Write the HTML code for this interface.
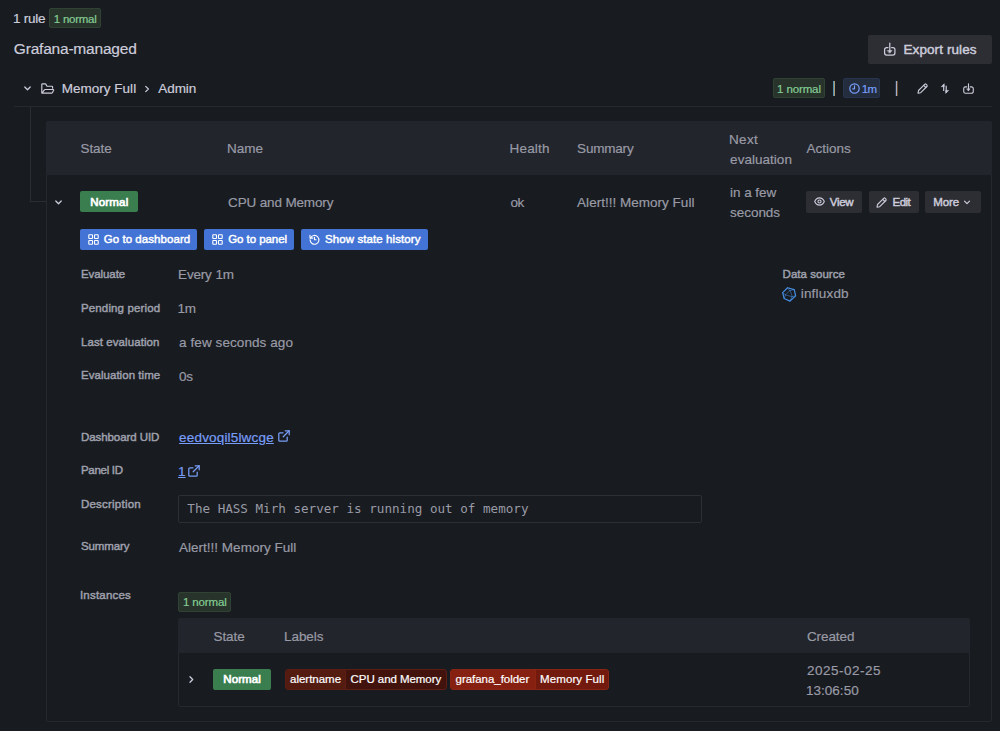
<!DOCTYPE html>
<html lang="en">
<head>
<meta charset="utf-8">
<title>Alert rules</title>
<style>
*{box-sizing:border-box;margin:0;padding:0}
html,body{width:1000px;height:731px;overflow:hidden;background:#181b1f;color:#ccccdc;font-family:"Liberation Sans", sans-serif;font-size:13px;line-height:20px}
.a,.t{position:absolute;white-space:nowrap}
.t{line-height:20px}
svg{position:absolute;overflow:visible}
</style>
</head>
<body>
<!-- summary badge -->
<div class="a" style="left:49px;top:8px;width:52px;height:20px;background:#28332b;border:1px solid #304234;border-radius:2px"></div>

<!-- export button -->
<div class="a" style="left:868px;top:35px;width:124px;height:29px;background:#2d2e33;border-radius:2px"></div>
<svg style="left:884px;top:42px" width="12" height="14" viewBox="0 0 12 14" fill="none" stroke="#ccccdc" stroke-width="1.250" stroke-linecap="round" stroke-linejoin="round"><path d="M4 5.600H2.600a2 2 0 0 0-2 2v3.400a2 2 0 0 0 2 2h6.300a2 2 0 0 0 2-2V7.600a2 2 0 0 0-2-2H7.600"/><path d="M5.800 1v8.500"/><path fill="#ccccdc" stroke-width=".6" d="M3.600 8.600h4.400L5.800 11z"/></svg>

<!-- folder row -->
<svg style="left:23px;top:85px" width="9" height="7" viewBox="0 0 9 7" fill="none" stroke="#ccccdc" stroke-width="1.3" stroke-linecap="round" stroke-linejoin="round"><path d="M1.800 2l2.700 2.700L7.200 2"/></svg>
<svg style="left:41px;top:83px" width="14" height="11" viewBox="0 0 14 11" fill="none" stroke="#ccccdc" stroke-width="1.150" stroke-linecap="round" stroke-linejoin="round"><path d="M.8 9.600V1.500a.7.7 0 0 1 .7-.7h2.700a.7.7 0 0 1 .6.350l1.200 2.050h4.900a.7.7 0 0 1 .7.7v1.300"/><path d="M.9 10.100l2.500-3.200a1 1 0 0 1 .8-.4h8a.5.5 0 0 1 .45.720l-1.300 2.450a.8.8 0 0 1-.7.430z"/></svg>
<svg style="left:144px;top:85px" width="6" height="8" viewBox="0 0 6 8" fill="none" stroke="#ccccdc" stroke-width="1.200" stroke-linecap="round" stroke-linejoin="round"><path d="M1.700 1.300L4.400 4 1.700 6.700"/></svg>

<!-- folder row right -->
<div class="a" style="left:773px;top:78px;width:52px;height:20px;background:#28332b;border:1px solid #304234;border-radius:2px"></div>
<div class="a" style="left:833px;top:81px;width:1px;height:15px;background:#4f8fb6"></div><div class="a" style="left:834px;top:81px;width:1px;height:15px;background:#b09c6e"></div>
<div class="a" style="left:843px;top:78px;width:37px;height:20px;background:#232d3e;border:1px solid #26344e;border-radius:2px"></div>
<svg style="left:848.500px;top:83px" width="11" height="11" viewBox="0 0 11 11" fill="none" stroke="#789ef9" stroke-width="1.200" stroke-linecap="round" stroke-linejoin="round"><circle cx="5.500" cy="5.500" r="4.700"/><path d="M5.500 2.800v3H3.700"/></svg>
<div class="a" style="left:895px;top:81px;width:1px;height:15px;background:#263950"></div><div class="a" style="left:896px;top:81px;width:1px;height:15px;background:#a3b0c3"></div><div class="a" style="left:897px;top:81px;width:1px;height:15px;background:#6c4828"></div>
<svg style="left:917px;top:83px" width="11" height="11" viewBox="0 0 11 11" fill="none" stroke="#ccccdc" stroke-width="1.100" stroke-linecap="round" stroke-linejoin="round"><path d="M1 10.200l.5-2.700L7.700 1.300a1.100 1.100 0 0 1 1.500 0l.7.700a1.100 1.100 0 0 1 0 1.500L3.700 9.700z"/><path d="M6.700 2.400l2.100 2.100"/></svg>
<svg style="left:940px;top:83px" width="10" height="11" viewBox="0 0 10 11" fill="#ccccdc" stroke="#ccccdc" stroke-width="1.200" stroke-linecap="butt" stroke-linejoin="round"><path fill="none" d="M3.700 8V1.600"/><path stroke-width=".5" d="M4.200.7v3h-3z"/><path fill="none" d="M6.200 2.800v6.600"/><path stroke-width=".5" d="M5.700 10.400v-3h3z"/></svg>
<svg style="left:962.500px;top:83px" width="11" height="11" viewBox="0 0 12 12" fill="none" stroke="#ccccdc" stroke-width="1.200" stroke-linecap="round" stroke-linejoin="round"><path d="M4.200 4.200H2.700a1.900 1.900 0 0 0-1.900 1.900v3.200a1.900 1.900 0 0 0 1.900 1.900h6.600a1.900 1.900 0 0 0 1.900-1.900V6.100a1.900 1.900 0 0 0-1.900-1.900H7.800"/><path d="M6 .8v6.800"/><path fill="#ccccdc" stroke-width=".5" d="M4.200 6.400h3.600L6 8.600z"/></svg>

<!-- tree lines -->
<div class="a" style="left:14px;top:106px;width:978px;height:1px;background:#25282d"></div>
<div class="a" style="left:30px;top:107px;width:1px;height:95px;background:#2a2d33"></div>
<div class="a" style="left:30px;top:201px;width:16px;height:1px;background:#2a2d33"></div>

<!-- rules table -->
<div class="a" style="left:46px;top:121px;width:946px;height:601px;border:1px solid #25282e;border-radius:2px"></div>
<div class="a" style="left:46px;top:121px;width:946px;height:54px;background:#22252b;border-radius:2px 2px 0 0"></div>

<svg style="left:54px;top:199px" width="9" height="7" viewBox="0 0 9 7" fill="none" stroke="#ccccdc" stroke-width="1.300" stroke-linecap="round" stroke-linejoin="round"><path d="M1.800 2l2.700 2.700L7.200 2"/></svg>
<div class="a" style="left:80px;top:191px;width:58px;height:21px;background:#3a7e50;border-radius:2px"></div>

<div class="a" style="left:806px;top:191px;width:56px;height:22px;background:#2d2e33;border-radius:2px"></div>
<svg style="left:813.800px;top:197.300px" width="11" height="9" viewBox="0 0 11 9" fill="none" stroke="#ccccdc" stroke-width="1.100" stroke-linejoin="round"><path d="M.7 4.500C1.700 2.300 3.400.9 5.500.9s3.800 1.400 4.800 3.600C9.300 6.700 7.600 8.100 5.500 8.100S1.700 6.700.7 4.500z"/><circle cx="5.500" cy="4.500" r="1.550"/></svg>
<div class="a" style="left:869px;top:191px;width:50px;height:22px;background:#2d2e33;border-radius:2px"></div>
<svg style="left:876px;top:196.700px" width="11" height="11" viewBox="0 0 11 11" fill="none" stroke="#ccccdc" stroke-width="1.100" stroke-linecap="round" stroke-linejoin="round"><path d="M1 10.200l.5-2.700L7.700 1.300a1.100 1.100 0 0 1 1.500 0l.7.700a1.100 1.100 0 0 1 0 1.500L3.700 9.700z"/><path d="M6.700 2.400l2.100 2.100"/></svg>
<div class="a" style="left:925px;top:191px;width:56px;height:22px;background:#2d2e33;border-radius:2px"></div>
<svg style="left:963px;top:199px" width="8" height="7" viewBox="0 0 8 7" fill="none" stroke="#ccccdc" stroke-width="1.200" stroke-linecap="round" stroke-linejoin="round"><path d="M1.500 2.200L4 4.700l2.500-2.500"/></svg>

<!-- primary buttons -->
<div class="a" style="left:80px;top:229px;width:117px;height:21px;background:#4373d4;border-radius:2px"></div>
<svg style="left:87.900px;top:234px" width="11" height="11" viewBox="0 0 11 11" fill="none" stroke="#fff" stroke-width="1.100"><rect x=".8" y=".8" width="3.700" height="3.700" rx=".5"/><rect x="6.500" y=".8" width="3.700" height="3.700" rx=".5"/><rect x=".8" y="6.500" width="3.700" height="3.700" rx=".5"/><rect x="6.500" y="6.500" width="3.700" height="3.700" rx=".5"/></svg>
<div class="a" style="left:204px;top:229px;width:90px;height:21px;background:#4373d4;border-radius:2px"></div>
<svg style="left:211.600px;top:234px" width="11" height="11" viewBox="0 0 11 11" fill="none" stroke="#fff" stroke-width="1.100"><rect x=".8" y=".8" width="3.700" height="3.700" rx=".5"/><rect x="6.500" y=".8" width="3.700" height="3.700" rx=".5"/><rect x=".8" y="6.500" width="3.700" height="3.700" rx=".5"/><rect x="6.500" y="6.500" width="3.700" height="3.700" rx=".5"/></svg>
<div class="a" style="left:301px;top:229px;width:127px;height:21px;background:#4373d4;border-radius:2px"></div>
<svg style="left:309px;top:234px" width="11" height="11" viewBox="0 0 11 11" fill="none" stroke="#fff" stroke-width="1.100" stroke-linecap="round" stroke-linejoin="round"><path d="M1.500 4A4.400 4.400 0 1 1 1.100 5.800"/><path d="M1 1.300v2.800h2.800"/><path d="M5.500 3.400v2.300h1.600"/></svg>

<!-- external link icons -->
<svg style="left:278px;top:430.400px" width="12" height="12" viewBox="0 0 12 12" fill="none" stroke="#789ef9" stroke-width="1.250" stroke-linecap="round" stroke-linejoin="round"><path d="M9.200 7v3.200a1 1 0 0 1-1 1H1.800a1 1 0 0 1-1-1V3.800a1 1 0 0 1 1-1H5"/><path d="M7.200.8h4v4"/><path d="M11.200.8L5.200 6.800"/></svg>
<svg style="left:188px;top:464.500px" width="12" height="12" viewBox="0 0 12 12" fill="none" stroke="#789ef9" stroke-width="1.250" stroke-linecap="round" stroke-linejoin="round"><path d="M9.200 7v3.200a1 1 0 0 1-1 1H1.800a1 1 0 0 1-1-1V3.800a1 1 0 0 1 1-1H5"/><path d="M7.200.8h4v4"/><path d="M11.200.8L5.200 6.800"/></svg>

<!-- description box -->
<div class="a" style="left:178px;top:495px;width:524px;height:28px;border:1px solid #2c2f36;border-radius:2px;background:#181b1f"></div>

<!-- instances -->
<div class="a" style="left:178px;top:592px;width:53px;height:20px;background:#28332b;border:1px solid #304234;border-radius:2px"></div>
<div class="a" style="left:178px;top:618px;width:792px;height:89px;border:1px solid #25282e;border-radius:2px"></div>
<div class="a" style="left:178px;top:618px;width:792px;height:35px;background:#22252b;border-radius:2px 2px 0 0"></div>
<svg style="left:188px;top:675px" width="7" height="9" viewBox="0 0 7 9" fill="none" stroke="#ccccdc" stroke-width="1.300" stroke-linecap="round" stroke-linejoin="round"><path d="M2 1.800L4.700 4.500 2 7.200"/></svg>
<div class="a" style="left:213px;top:669px;width:58px;height:21px;background:#3a7e50;border-radius:2px"></div>

<div class="a" style="left:284.500px;top:669px;width:162.500px;height:21px;background:#42130d;border:1px solid #5c1e14;border-radius:3px;overflow:hidden"><div class="a" style="left:0;top:0;width:60px;height:19px;background:#541b11;border-right:1px solid #5e1e14"></div></div>
<div class="a" style="left:450px;top:669px;width:159px;height:21px;background:#721a0d;border:1px solid #8a2414;border-radius:3px;overflow:hidden"><div class="a" style="left:0;top:0;width:85px;height:19px;background:#862010;border-right:1px solid #8c2412"></div></div>

<!-- influx icon -->
<svg style="left:778px;top:284px" width="22" height="20" viewBox="0 0 22 20" fill="none" stroke="#468ce1" stroke-linejoin="round" stroke-linecap="round"><g transform="translate(11.2 10.4) scale(.92) translate(-11.2 -10.4)"><path stroke-width="1.350" d="M9.440 3.150L16.690 5.200L18.190 12.040L12.040 17.650L5.750 14.910L4.100 8.480Z"/><path stroke-width=".75" stroke-opacity=".75" d="M11.760 6.290L7.110 10.940L14.230 12.860ZM11.760 6.290L9.440 3.150M11.760 6.290L16.690 5.200M7.110 10.940L4.100 8.480M7.110 10.940L5.750 14.910M14.230 12.860L18.190 12.040M14.230 12.860L12.040 17.650"/></g></svg>

<div class="t" style="left:13.10px;top:8.50px;font-size:13.5px;letter-spacing:-0.292px;color:#ccccdc;-webkit-text-stroke:0.2px #ccccdc;">1 rule</div>
<div class="t" style="left:53.85px;top:9.00px;font-size:11.5px;letter-spacing:-0.270px;color:#85cd94;-webkit-text-stroke:0.2px #85cd94;">1 normal</div>
<div class="t" style="left:13.85px;top:38.50px;font-size:15.5px;letter-spacing:-0.206px;color:#ccccdc;-webkit-text-stroke:0.2px #ccccdc;">Grafana-managed</div>
<div class="t" style="left:903.48px;top:39.50px;font-size:13.5px;letter-spacing:0.093px;color:#ccccdc;-webkit-text-stroke:0.45px #ccccdc;">Export rules</div>
<div class="t" style="left:61.70px;top:78.50px;font-size:13.5px;letter-spacing:0.019px;color:#ccccdc;-webkit-text-stroke:0.2px #ccccdc;">Memory Full</div>
<div class="t" style="left:158.35px;top:78.50px;font-size:13.5px;letter-spacing:-0.114px;color:#ccccdc;-webkit-text-stroke:0.2px #ccccdc;">Admin</div>
<div class="t" style="left:777.10px;top:79.00px;font-size:11.5px;letter-spacing:-0.127px;color:#85cd94;-webkit-text-stroke:0.2px #85cd94;">1 normal</div>
<div class="g"><span class="t" style="left:861.70px;top:79.00px;font-size:11.5px;letter-spacing:0.000px;color:#789ef9;-webkit-text-stroke:0.2px #789ef9;">1</span><span class="t" style="left:867.50px;top:79.00px;font-size:11.5px;letter-spacing:0.000px;color:#789ef9;-webkit-text-stroke:0.2px #789ef9;">m</span></div>
<div class="t" style="left:80.60px;top:138.50px;font-size:13.5px;letter-spacing:-0.116px;color:#999aa6;-webkit-text-stroke:0.2px #999aa6;">State</div>
<div class="t" style="left:227.10px;top:138.50px;font-size:13.5px;letter-spacing:-0.068px;color:#999aa6;-webkit-text-stroke:0.2px #999aa6;">Name</div>
<div class="t" style="left:509.60px;top:138.50px;font-size:13.5px;letter-spacing:0.157px;color:#999aa6;-webkit-text-stroke:0.2px #999aa6;">Health</div>
<div class="t" style="left:577.10px;top:138.50px;font-size:13.5px;letter-spacing:-0.201px;color:#999aa6;-webkit-text-stroke:0.2px #999aa6;">Summary</div>
<div class="g"><span class="t" style="left:729.10px;top:129.50px;font-size:13.5px;letter-spacing:0.264px;color:#999aa6;-webkit-text-stroke:0.2px #999aa6;">Next</span> <span class="t" style="left:730.10px;top:149.50px;font-size:13.5px;letter-spacing:0.029px;color:#999aa6;-webkit-text-stroke:0.2px #999aa6;">evaluation</span></div>
<div class="t" style="left:806.60px;top:138.50px;font-size:13.5px;letter-spacing:-0.037px;color:#999aa6;-webkit-text-stroke:0.2px #999aa6;">Actions</div>
<div class="t" style="left:90.35px;top:192.00px;font-size:11.5px;letter-spacing:0.159px;color:#ffffff;-webkit-text-stroke:0.7px #ffffff;">Normal</div>
<div class="t" style="left:228.10px;top:192.50px;font-size:13.5px;letter-spacing:-0.152px;color:#999aa6;-webkit-text-stroke:0.2px #999aa6;">CPU and Memory</div>
<div class="t" style="left:510.60px;top:192.50px;font-size:13.5px;letter-spacing:-0.708px;color:#999aa6;-webkit-text-stroke:0.2px #999aa6;">ok</div>
<div class="t" style="left:577.10px;top:192.50px;font-size:13.5px;letter-spacing:0.015px;color:#999aa6;-webkit-text-stroke:0.2px #999aa6;">Alert!!! Memory Full</div>
<div class="g"><span class="t" style="left:730.10px;top:182.50px;font-size:13.5px;letter-spacing:-0.068px;color:#999aa6;-webkit-text-stroke:0.2px #999aa6;">in a few</span> <span class="t" style="left:730.10px;top:202.50px;font-size:13.5px;letter-spacing:-0.055px;color:#999aa6;-webkit-text-stroke:0.2px #999aa6;">seconds</span></div>
<div class="t" style="left:829.83px;top:192.00px;font-size:11.5px;letter-spacing:-0.321px;color:#ccccdc;-webkit-text-stroke:0.45px #ccccdc;">View</div>
<div class="t" style="left:892.52px;top:192.00px;font-size:11.5px;letter-spacing:-0.524px;color:#ccccdc;-webkit-text-stroke:0.45px #ccccdc;">Edit</div>
<div class="t" style="left:933.23px;top:192.00px;font-size:11.5px;letter-spacing:-0.085px;color:#ccccdc;-webkit-text-stroke:0.45px #ccccdc;">More</div>
<div class="t" style="left:103.72px;top:229.00px;font-size:11.5px;letter-spacing:0.055px;color:#ffffff;-webkit-text-stroke:0.45px #ffffff;">Go to dashboard</div>
<div class="t" style="left:228.22px;top:229.00px;font-size:11.5px;letter-spacing:-0.060px;color:#ffffff;-webkit-text-stroke:0.45px #ffffff;">Go to panel</div>
<div class="t" style="left:324.98px;top:229.00px;font-size:11.5px;letter-spacing:0.094px;color:#ffffff;-webkit-text-stroke:0.45px #ffffff;">Show state history</div>
<div class="t" style="left:80.97px;top:264.00px;font-size:11.5px;letter-spacing:-0.080px;color:#9fa0ad;-webkit-text-stroke:0.45px #9fa0ad;">Evaluate</div>
<div class="g"><span class="t" style="left:178.10px;top:264.50px;font-size:13.5px;letter-spacing:-0.215px;color:#999aa6;-webkit-text-stroke:0.2px #999aa6;">Every</span> <span class="t" style="left:215.60px;top:264.50px;font-size:13.5px;letter-spacing:0.000px;color:#999aa6;-webkit-text-stroke:0.2px #999aa6;">1</span><span class="t" style="left:222.80px;top:264.50px;font-size:13.5px;letter-spacing:0.000px;color:#999aa6;-webkit-text-stroke:0.2px #999aa6;">m</span></div>
<div class="t" style="left:80.97px;top:298.00px;font-size:11.5px;letter-spacing:0.141px;color:#9fa0ad;-webkit-text-stroke:0.45px #9fa0ad;">Pending period</div>
<div class="g"><span class="t" style="left:177.60px;top:298.50px;font-size:13.5px;letter-spacing:0.000px;color:#999aa6;-webkit-text-stroke:0.2px #999aa6;">1</span><span class="t" style="left:184.70px;top:298.50px;font-size:13.5px;letter-spacing:0.000px;color:#999aa6;-webkit-text-stroke:0.2px #999aa6;">m</span></div>
<div class="t" style="left:80.97px;top:332.00px;font-size:11.5px;letter-spacing:0.077px;color:#9fa0ad;-webkit-text-stroke:0.45px #9fa0ad;">Last evaluation</div>
<div class="t" style="left:179.10px;top:332.50px;font-size:13.5px;letter-spacing:0.077px;color:#999aa6;-webkit-text-stroke:0.2px #999aa6;">a few seconds ago</div>
<div class="t" style="left:80.97px;top:365.00px;font-size:11.5px;letter-spacing:0.041px;color:#9fa0ad;-webkit-text-stroke:0.45px #9fa0ad;">Evaluation time</div>
<div class="t" style="left:179.10px;top:366.50px;font-size:13.5px;letter-spacing:-0.458px;color:#999aa6;-webkit-text-stroke:0.2px #999aa6;">0s</div>
<div class="t" style="left:80.97px;top:427.00px;font-size:11.5px;letter-spacing:-0.075px;color:#9fa0ad;-webkit-text-stroke:0.45px #9fa0ad;">Dashboard UID</div>
<div class="t" style="left:179.10px;top:427.50px;font-size:13.5px;letter-spacing:0.173px;color:#789ef9;-webkit-text-stroke:0.2px #789ef9;text-decoration:underline;text-underline-offset:1px">eedvoqil5lwcge</div>
<div class="t" style="left:80.97px;top:460.00px;font-size:11.5px;letter-spacing:-0.286px;color:#9fa0ad;-webkit-text-stroke:0.45px #9fa0ad;">Panel ID</div>
<div class="t" style="left:178.10px;top:461.50px;font-size:13.5px;letter-spacing:0.000px;color:#789ef9;-webkit-text-stroke:0.2px #789ef9;text-decoration:underline;text-underline-offset:1px">1</div>
<div class="t" style="left:80.97px;top:494.00px;font-size:11.5px;letter-spacing:0.217px;color:#9fa0ad;-webkit-text-stroke:0.45px #9fa0ad;">Description</div>
<div class="t" style="left:187.30px;top:498.50px;font-size:12.6px;letter-spacing:-0.000px;color:#999aa6;font-family:'DejaVu Sans Mono', 'Liberation Mono', monospace;">The HASS Mirh server is running out of memory</div>
<div class="t" style="left:80.97px;top:536.00px;font-size:11.5px;letter-spacing:-0.108px;color:#9fa0ad;-webkit-text-stroke:0.45px #9fa0ad;">Summary</div>
<div class="t" style="left:179.10px;top:537.50px;font-size:13.5px;letter-spacing:0.002px;color:#999aa6;-webkit-text-stroke:0.2px #999aa6;">Alert!!! Memory Full</div>
<div class="t" style="left:79.97px;top:585.00px;font-size:11.5px;letter-spacing:0.197px;color:#9fa0ad;-webkit-text-stroke:0.45px #9fa0ad;">Instances</div>
<div class="t" style="left:183.10px;top:592.00px;font-size:11.5px;letter-spacing:-0.162px;color:#85cd94;-webkit-text-stroke:0.2px #85cd94;">1 normal</div>
<div class="t" style="left:213.60px;top:626.50px;font-size:13.5px;letter-spacing:-0.116px;color:#999aa6;-webkit-text-stroke:0.2px #999aa6;">State</div>
<div class="t" style="left:284.10px;top:626.50px;font-size:13.5px;letter-spacing:-0.096px;color:#999aa6;-webkit-text-stroke:0.2px #999aa6;">Labels</div>
<div class="t" style="left:806.90px;top:626.50px;font-size:13.5px;letter-spacing:-0.087px;color:#999aa6;-webkit-text-stroke:0.2px #999aa6;">Created</div>
<div class="t" style="left:223.35px;top:669.00px;font-size:11.5px;letter-spacing:0.059px;color:#ffffff;-webkit-text-stroke:0.7px #ffffff;">Normal</div>
<div class="t" style="left:290.10px;top:669.00px;font-size:11.5px;letter-spacing:-0.024px;color:#ffffff;-webkit-text-stroke:0.2px #ffffff;">alertname</div>
<div class="t" style="left:350.60px;top:669.00px;font-size:11.5px;letter-spacing:-0.064px;color:#ffffff;-webkit-text-stroke:0.2px #ffffff;">CPU and Memory</div>
<div class="t" style="left:455.60px;top:669.00px;font-size:11.5px;letter-spacing:-0.041px;color:#ffffff;-webkit-text-stroke:0.2px #ffffff;">grafana_folder</div>
<div class="t" style="left:540.10px;top:669.00px;font-size:11.5px;letter-spacing:0.085px;color:#ffffff;-webkit-text-stroke:0.2px #ffffff;">Memory Full</div>
<div class="g"><span class="t" style="left:806.90px;top:660.50px;font-size:13.5px;letter-spacing:0.495px;color:#999aa6;-webkit-text-stroke:0.2px #999aa6;">2025-02-25</span> <span class="t" style="left:805.90px;top:680.50px;font-size:13.5px;letter-spacing:0.037px;color:#999aa6;-webkit-text-stroke:0.2px #999aa6;">13:06:50</span></div>
<div class="t" style="left:782.62px;top:264.00px;font-size:11.5px;letter-spacing:0.024px;color:#9fa0ad;-webkit-text-stroke:0.45px #9fa0ad;">Data source</div>
<div class="t" style="left:800.70px;top:283.50px;font-size:13.5px;letter-spacing:0.197px;color:#999aa6;-webkit-text-stroke:0.2px #999aa6;">influxdb</div>
</body>
</html>
